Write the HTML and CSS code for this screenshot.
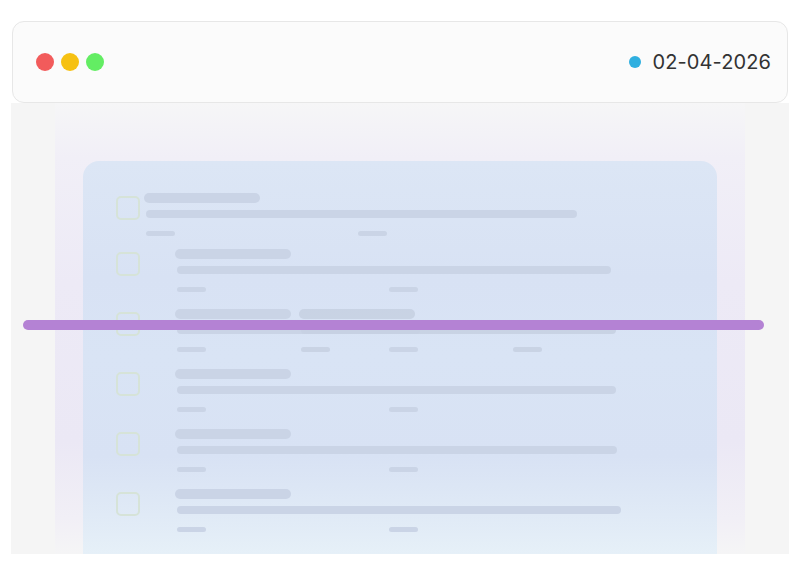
FILE: index.html
```html
<!DOCTYPE html>
<html>
<head>
<meta charset="utf-8">
<link rel="stylesheet" href="styles.css">
</head>
<body>
<div class="window">
  <div class="topbar">
    <div class="lights">
      <span class="light red"></span>
      <span class="light yellow"></span>
      <span class="light green"></span>
    </div>
    <div class="date"><span class="dot"></span><span class="date-text">02-04-2026</span></div>
  </div>
  <div class="stage">
    <div class="panel">
      <div class="card">
        <div class="row first">
          <span class="check"></span>
          <div class="content c1">
            <div class="bar title"></div>
            <div class="bar desc" style="width:431px"></div>
            <div class="meta"><span class="bar small"></span><span class="bar small"></span></div>
          </div>
        </div>
        <div class="row">
          <span class="check"></span>
          <div class="content">
            <div class="bar title"></div>
            <div class="bar desc" style="width:434px"></div>
            <div class="meta"><span class="bar small"></span><span class="bar small"></span></div>
          </div>
        </div>
        <div class="row">
          <span class="check"></span>
          <div class="content">
            <div class="bar title"></div>
            <div class="bar desc" style="width:243px"></div>
            <div class="meta"><span class="bar small"></span><span class="bar small"></span></div>
            <div class="ghost">
              <div class="bar title"></div>
              <div class="bar desc" style="width:315px"></div>
              <div class="meta"><span class="bar small"></span><span class="bar small"></span></div>
            </div>
          </div>
        </div>
        <div class="row">
          <span class="check"></span>
          <div class="content">
            <div class="bar title"></div>
            <div class="bar desc" style="width:439px"></div>
            <div class="meta"><span class="bar small"></span><span class="bar small"></span></div>
          </div>
        </div>
        <div class="row">
          <span class="check"></span>
          <div class="content">
            <div class="bar title"></div>
            <div class="bar desc" style="width:440px"></div>
            <div class="meta"><span class="bar small"></span><span class="bar small"></span></div>
          </div>
        </div>
        <div class="row">
          <span class="check"></span>
          <div class="content">
            <div class="bar title"></div>
            <div class="bar desc" style="width:444px"></div>
            <div class="meta"><span class="bar small"></span><span class="bar small"></span></div>
          </div>
        </div>
      </div>
    </div>
  </div>
</div>
<div class="scanline"></div>
</body>
</html>
```
FILE: styles.css
```css
html, body {
  margin: 0;
  padding: 0;
  background: #ffffff;
  width: 800px;
  height: 564px;
  overflow: hidden;
  font-family: "Inter", "Liberation Sans", sans-serif;
}

.window {
  margin: 21px 11px 0;
  width: 778px;
}

.topbar {
  margin: 0 1px;
  height: 82px;
  box-sizing: border-box;
  border: 1px solid #e7e7e7;
  border-radius: 12px;
  background: #fbfbfb;
  display: flex;
  align-items: center;
  justify-content: space-between;
  padding: 0 16px 0 23px;
  position: relative;
  z-index: 2;
}

.lights {
  display: flex;
  gap: 7px;
}

.light {
  width: 18px;
  height: 18px;
  border-radius: 50%;
  display: block;
}
.red { background: #f25b5b; }
.yellow { background: #f6c112; }
.green { background: #63ed63; }

.date {
  display: flex;
  align-items: center;
  gap: 12px;
}

.dot {
  width: 12px;
  height: 12px;
  border-radius: 50%;
  background: #2fafe0;
  display: block;
}

.date-text {
  font-size: 20px;
  color: #333333;
  letter-spacing: 0.1px;
}

.stage {
  height: 451px;
  background: #f5f5f5;
}

.panel {
  margin: 0 44px;
  height: 100%;
  box-sizing: border-box;
  padding-top: 58px;
  background: linear-gradient(to bottom, #f6f6f7 0%, #f1eff7 12%, #edeaf6 40%, #ebe8f5 75%, #f1eff6 92%, #f5f5f6 100%);
}

.card {
  margin: 0 28px;
  height: 100%;
  box-sizing: border-box;
  border-radius: 16px 16px 0 0;
  background: linear-gradient(to bottom, #dce6f5 0%, #d8e2f4 30%, #d9e4f5 50%, #d8e2f4 75%, #e0eaf6 90%, #e6f0f8 100%);
  padding: 32px 0 0 33px;
}

.row {
  display: flex;
  align-items: flex-start;
  height: 60px;
}
.row.first {
  height: 56px;
}

.check {
  width: 24px;
  height: 24px;
  box-sizing: border-box;
  border: 2px solid #d6e3d8;
  border-radius: 5px;
  margin-top: 3px;
  flex: none;
}

.content {
  margin-left: 35px;
  position: relative;
}
.content.c1 {
  margin-left: 4px;
}

.bar {
  display: block;
  background: #cad4e6;
  border-radius: 5px;
}

.title {
  width: 116px;
  height: 10px;
}

.desc {
  height: 8px;
  margin: 7px 0 0 2px;
  border-radius: 4px;
}

.meta {
  display: flex;
  gap: 183px;
  margin: 13px 0 0 2px;
}

.small {
  width: 29px;
  height: 5px;
  border-radius: 3px;
}

.ghost {
  position: absolute;
  left: 124px;
  top: 0;
}

.ghost .bar {
  background: rgba(198, 208, 226, 0.9);
}

.scanline {
  position: absolute;
  left: 23px;
  top: 320px;
  width: 741px;
  height: 10px;
  border-radius: 5px;
  background: #b482d4;
  z-index: 5;
}
```
